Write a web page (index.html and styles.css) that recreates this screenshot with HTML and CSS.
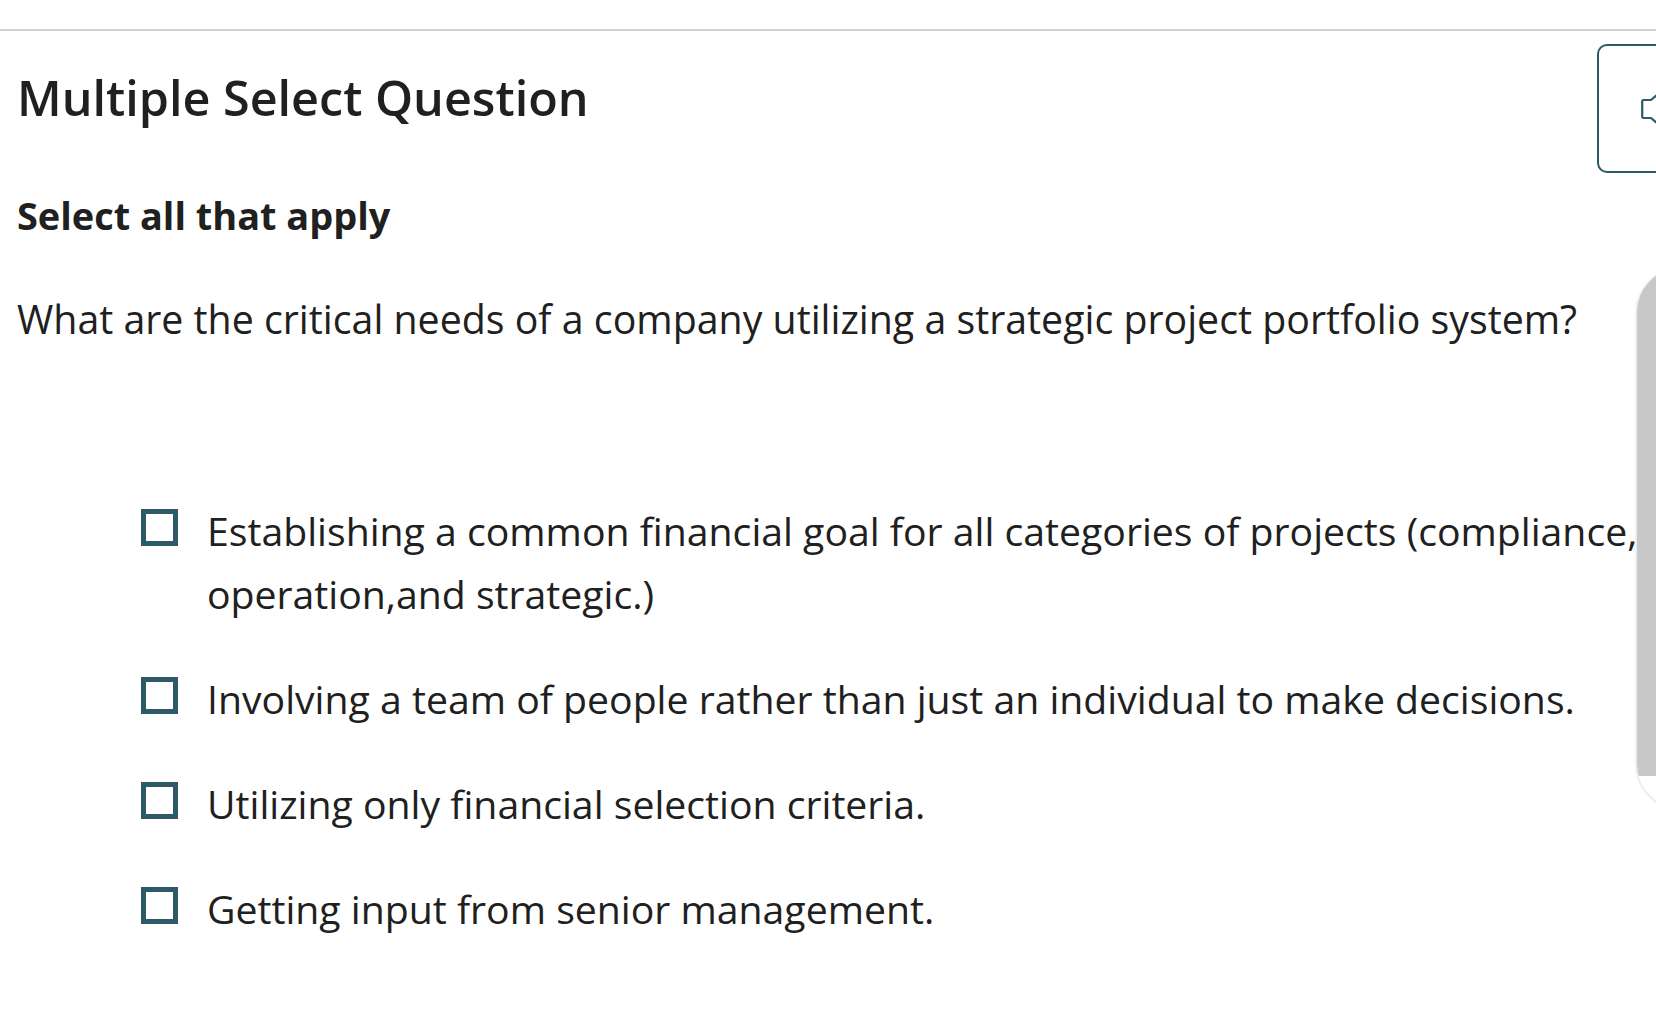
FILE: index.html
```html
<!DOCTYPE html>
<html lang="en">
<head>
<meta charset="utf-8">
<title>Multiple Select Question</title>
<link rel="stylesheet" href="styles.css">
</head>
<body>
<div class="topbar"></div>
<main class="main">
  <h1 class="title">Multiple Select Question</h1>
  <h2 class="subtitle">Select all that apply</h2>
  <p class="question">What are the critical needs of a company utilizing a strategic project portfolio system?</p>
  <ul class="options">
    <li class="option"><span class="box"></span><span class="label">Establishing a common financial goal for all categories of projects (compliance, operation,and strategic.)</span></li>
    <li class="option"><span class="box"></span><span class="label">Involving a team of people rather than just an individual to make decisions.</span></li>
    <li class="option"><span class="box"></span><span class="label">Utilizing only financial selection criteria.</span></li>
    <li class="option"><span class="box"></span><span class="label">Getting input from senior management.</span></li>
  </ul>
</main>
<button class="audio-btn" type="button" aria-label="Read aloud">
  <svg class="speaker" width="30" height="50" viewBox="0 0 30 50"><path d="M2.5 16 H10 L24 4 V46 L10 34 H2.5 Q1.2 34 1.2 32.5 V17.5 Q1.2 16 2.5 16 Z" fill="none" stroke="#2e5a67" stroke-width="2.2" stroke-linejoin="round"/></svg>
</button>
<div class="side-panel"></div>
</body>
</html>
```

FILE: styles.css
```css
html, body {
  margin: 0;
  padding: 0;
  background: #ffffff;
  overflow: hidden;
}
body {
  width: 1656px;
  height: 1011px;
  position: relative;
  font-family: "Open Sans", "Noto Sans", sans-serif;
  font-variant-ligatures: none;
  color: #202020;
}
.topbar {
  height: 29px;
  border-bottom: 2px solid #cdd3d6;
}
.main {
  padding-left: 17px;
}
.title {
  margin: 38px 0 0 0;
  font-size: 48.5px;
  line-height: 56px;
  font-weight: 600;
}
.subtitle {
  margin: 68px 0 0 0;
  font-size: 37.9px;
  line-height: 44px;
  font-weight: 700;
}
.question {
  margin: 59px 0 0 0;
  font-size: 39.3px;
  line-height: 46px;
  font-weight: 400;
}
.options {
  list-style: none;
  margin: 157px 0 0 0;
  padding: 0 0 0 124px;
  display: flex;
  flex-direction: column;
  gap: 42px;
}
.option {
  display: flex;
  align-items: flex-start;
  gap: 29px;
}
.box {
  flex: none;
  width: 27px;
  height: 27px;
  border: 5px solid #2e5a67;
  margin-top: 10px;
}
.label {
  width: 1550px;
  font-size: 39.2px;
  line-height: 63px;
}
.audio-btn {
  position: absolute;
  left: 1597px;
  top: 44px;
  width: 110px;
  height: 129px;
  border: 2px solid #2e5a67;
  border-radius: 10px;
  background: #ffffff;
  padding: 0 0 0 42px;
  display: flex;
  align-items: center;
  box-sizing: border-box;
}
.speaker {
  display: block;
}
.side-panel {
  position: absolute;
  left: 1637px;
  top: 268px;
  width: 60px;
  height: 540px;
  border-radius: 44px 0 0 44px;
  background: linear-gradient(#c8c8c8 0, #c8c8c8 94%, #ffffff 94%);
  box-shadow: -1px 1px 3px rgba(0,0,0,0.12);
}
```
